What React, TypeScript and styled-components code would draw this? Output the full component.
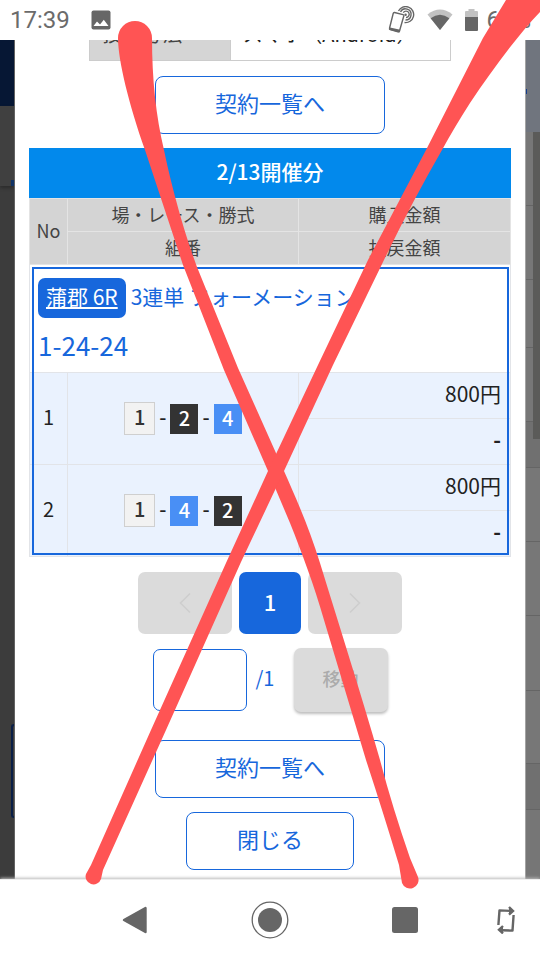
import React from "react";
import styled, { createGlobalStyle, css } from "styled-components";

const blue = "#1767dc";
const red = "#ff5454";
const iconGray = "#666666";

const GlobalStyle = createGlobalStyle`
  *, *::before, *::after { box-sizing: border-box; }
  body {
    margin: 0;
    background: #ffffff;
    color: #222222;
    font-family: "Noto Sans CJK JP", "Noto Sans", sans-serif;
    font-size: 22px;
  }
  button, input { font: inherit; }
`;

const Screen = styled.div`
  position: relative;
  display: flex;
  flex-direction: column;
  min-height: 100vh;
  overflow: hidden;
`;

const StatusBar = styled.header`
  display: flex;
  align-items: center;
  height: 40px;
  padding: 0 9px 0 10px;
  color: #6b6b6b;
  font-family: Roboto, sans-serif;
  font-size: 24px;
  line-height: 42px;
`;

const Clock = styled.time`
  margin-right: 21px;
`;

const StatusIcons = styled.div`
  display: flex;
  align-items: center;
  gap: 12px;
  margin-left: auto;
  svg { display: block; }
`;

const BatteryStatus = styled.div`
  display: flex;
  align-items: center;
  gap: 8px;
`;

const Stage = styled.main`
  flex: 1;
  display: grid;
  grid-template-columns: 15px minmax(0, 1fr) 15px;
  background: #3c3c3c;
`;

const Strip = styled.div`
  display: flex;
  flex-direction: column;
  overflow: hidden;
`;

const LeftStrip = styled(Strip)`
  border-right: 1px solid #626262;
`;

const NavyBand = styled.div`
  height: 66px;
  background: #061734;
`;

const TabBand = styled.div`
  display: flex;
  align-items: flex-end;
  justify-content: flex-end;
  height: 80px;
  background: #404040;
  box-shadow: 0 2px 3px #2c2c2c;
`;

const TabMark = styled.span`
  width: 3px;
  height: 6px;
  background: #103366;
`;

const FieldEdge = styled.div`
  align-self: flex-end;
  width: 3px;
  height: 94px;
  margin-top: 538px;
  border: 2px solid #0a1f47;
  border-right: 0;
  border-radius: 4px 0 0 4px;
`;

const RightStrip = styled(Strip)`
  position: relative;
  background: #767676;
  border-left: 1px solid #a3a3a3;
`;

const HeadBand = styled.div`
  display: flex;
  align-items: center;
  height: 92px;
  padding-top: 10px;
  background: #70757e;
`;

const HeadMark = styled.span`
  width: 1px;
  height: 5px;
  background: #123c8c;
`;

const ListLine = styled.div<{ $height: number; $dim?: boolean }>`
  height: ${(p) => p.$height}px;
  border-bottom: 1px solid #656565;
  background: ${(p) => (p.$dim ? "#707070" : "#777777")};
`;

const ScrollThumb = styled.div`
  position: absolute;
  top: 92px;
  right: 0;
  width: 7px;
  height: 307px;
  background: #5b5b59;
`;

const Dialog = styled.section`
  display: flex;
  flex-direction: column;
  align-items: center;
  padding: 0 14px 9px;
  background: #ffffff;
`;

const MethodWindow = styled.div`
  display: flex;
  align-items: flex-end;
  width: 75%;
  height: 21px;
  margin-bottom: 15px;
  overflow: hidden;
`;

const MethodTable = styled.table`
  width: 100%;
  border-collapse: collapse;
  table-layout: fixed;
  font-size: 20px;
  line-height: 24px;
  text-align: left;
  th, td {
    height: 46px;
    padding: 0 12px 8px;
    border: 1px solid #cccccc;
    font-weight: 400;
  }
  th {
    width: 39%;
    background: #d5d5d5;
    color: #444444;
  }
`;

const OutlineButton = styled.button<{ $width: number }>`
  width: ${(p) => p.$width}px;
  height: 58px;
  padding: 0 0 6px;
  border: 1px solid ${blue};
  border-radius: 8px;
  background: #ffffff;
  color: ${blue};
  line-height: 28px;
`;

const DayTitle = styled.h2`
  width: 100%;
  height: 50px;
  margin: 14px 0 0;
  background: #0289ec;
  color: #ffffff;
  font-size: 21px;
  font-weight: 500;
  line-height: 46px;
  text-align: center;
`;

const BetTable = styled.table`
  width: 100%;
  border-collapse: collapse;
  table-layout: fixed;
  line-height: 28px;
`;

const NoCol = styled.col`
  width: 38px;
`;
const BetCol = styled.col`
  width: 48%;
`;

const HeadCell = styled.th`
  height: 33px;
  padding: 0 0 3px;
  border: 1px solid #e4e4e4;
  background: #d4d4d4;
  color: #444444;
  font-size: 18px;
  font-weight: 400;
`;

const Ticket = styled.tbody`
  outline: 2px solid ${blue};
  outline-offset: -4px;
`;

const cellBorder = css`
  border: 1px solid #e2e4e8;
`;

const TicketTitle = styled.td`
  ${cellBorder}
  height: 108px;
  padding: 2px 8px 0;
  color: ${blue};
  font-size: 21px;
  vertical-align: top;
`;

const TitleLine = styled.div`
  display: flex;
  align-items: center;
  gap: 5px;
  margin-top: 11px;
`;

const RaceLink = styled.a`
  height: 40px;
  padding: 0 8px;
  border-radius: 7px;
  background: ${blue};
  color: #ffffff;
  line-height: 37px;
  text-decoration: underline;
  text-decoration-thickness: 2px;
  text-underline-offset: 2px;
  white-space: nowrap;
`;

const BetType = styled.span`
  height: 40px;
  line-height: 36px;
`;

const Numbers = styled.div`
  margin-top: 9px;
  font-size: 26px;
  line-height: 36px;
`;

const DataCell = styled.td`
  ${cellBorder}
  height: 46px;
  padding: 0;
  background: #eaf2fe;
  font-size: 20px;
  text-align: center;
`;

const NoCell = styled(DataCell)`
  padding-bottom: 3px;
`;

const MoneyCell = styled(DataCell)<{ $strong?: boolean }>`
  padding: 0 9px 6px 0;
  font-size: 21px;
  font-weight: ${(p) => (p.$strong ? 700 : 400)};
  text-align: right;
`;

const Combination = styled.div`
  display: flex;
  align-items: center;
  justify-content: center;
  gap: 4px;
  font-weight: 500;
`;

const Dash = styled.span`
  padding-bottom: 4px;
`;

const chipColors = {
  1: { background: "#f2f2f2", color: "#333333" },
  2: { background: "#333333", color: "#ffffff" },
  4: { background: "#498ff5", color: "#ffffff" },
};

type Boat = keyof typeof chipColors;

const Chip = styled.span<{ $boat: Boat }>`
  width: ${(p) => (p.$boat === 1 ? 31 : 28)}px;
  height: ${(p) => (p.$boat === 1 ? 33 : 30)}px;
  border: ${(p) => (p.$boat === 1 ? "1px solid #cfcfcf" : "0")};
  background: ${(p) => chipColors[p.$boat].background};
  color: ${(p) => chipColors[p.$boat].color};
  line-height: 28px;
`;

const Pager = styled.nav`
  display: flex;
  justify-content: center;
  gap: 7px;
  margin-top: 15px;
`;

const PageButton = styled.button<{ $current?: boolean }>`
  display: flex;
  align-items: center;
  justify-content: center;
  width: ${(p) => (p.$current ? 62 : 94)}px;
  height: 62px;
  padding: 0 0 ${(p) => (p.$current ? 4 : 0)}px;
  border: 0;
  border-radius: 7px;
  background: ${(p) => (p.$current ? blue : "#dbdbdb")};
  color: ${(p) => (p.$current ? "#ffffff" : "#cecece")};
  font-weight: 500;
`;

const JumpForm = styled.form`
  display: flex;
  align-items: center;
  margin: 14px 0 28px;
  color: ${blue};
  font-size: 20px;
`;

const PageInput = styled.input`
  width: 94px;
  height: 62px;
  margin-right: 9px;
  padding: 0 12px;
  border: 1px solid ${blue};
  border-radius: 7px;
  background: #ffffff;
  color: ${blue};
`;

const PageTotal = styled.label`
  width: 38px;
  line-height: 28px;
  padding-bottom: 4px;
`;

const MoveButton = styled.button`
  width: 94px;
  height: 64px;
  padding: 0 0 4px;
  border: 0;
  border-radius: 7px;
  background: #dbdbdb;
  box-shadow: 0 2px 3px #bdbdbd;
  color: #ababab;
  font-size: 18px;
  font-weight: 500;
`;

const ButtonStack = styled.div`
  display: flex;
  flex-direction: column;
  align-items: center;
  gap: 14px;
`;

const SystemNav = styled.nav`
  position: relative;
  display: grid;
  grid-template-columns: 1fr 2fr 2fr 2fr 1fr;
  align-items: center;
  justify-items: center;
  height: 81px;
  border-top: 1px solid #eeeeee;
  background: #ffffff;
  box-shadow: 0 -1px 3px #bbbbbb;
`;

const SystemButton = styled.button`
  display: flex;
  padding: 0;
  border: 0;
  background: transparent;
`;

const Scribble = styled.svg`
  position: absolute;
  inset: 0;
  width: 100%;
  height: 100%;
  pointer-events: none;
`;

const PictureIcon = () => (
  <svg width="20" height="20" viewBox="0 0 20 20" aria-hidden="true">
    <rect width="19" height="19" x="0.5" y="0.5" rx="2" fill={iconGray} />
    <path d="M2.5 16 L6 11.5 L9 14.5 L12.8 9.8 L17.5 16 Z" fill="#fff" />
  </svg>
);

const TouchPhoneIcon = () => (
  <svg width="27" height="28" viewBox="0 0 27 28" aria-hidden="true">
    <g fill="none" stroke={iconGray} strokeWidth="1.4">
      <path d="M6.5 6.5 L15 8.6 Q16 9 15.8 10 L11.5 25 Q11.2 26 10 25.7 L2.3 23.6 Q1.2 23.2 1.5 22.2 L5.2 7.5 Q5.5 6.3 6.5 6.5Z" />
      <path d="M12.5 5.8 A5.6 5.6 0 1 1 17.5 14" />
      <path d="M10.5 5 A8 8 0 1 1 16.5 16.5" />
      <path d="M15.3 6.6 A3.2 3.2 0 1 1 18 11.5" />
    </g>
    <path d="M2 21.5 L12.3 23.8 L11.4 26.4 L1.2 23.8Z" fill={iconGray} />
    <circle cx="17.6" cy="8.7" r="1.2" fill={iconGray} />
  </svg>
);

const WifiIcon = () => (
  <svg width="26" height="22" viewBox="0 0 26 22" aria-hidden="true">
    <path d="M0.5 5.5 Q13 -4.5 25.5 5.5 L13 21Z" fill="#c2c2c2" />
    <path d="M3.6 9.3 Q13 2.2 22.4 9.3 L13 21Z" fill={iconGray} />
  </svg>
);

const BatteryIcon = () => (
  <svg width="13" height="22" viewBox="0 0 13 22" aria-hidden="true">
    <path d="M3.5 0 H9.5 V2 H12 Q13 2 13 3 V9 H0 V3 Q0 2 1 2 H3.5Z" fill="#c2c2c2" />
    <path d="M0 8 H13 V21 Q13 22 12 22 H1 Q0 22 0 21Z" fill={iconGray} />
  </svg>
);

const Chevron = ({ direction }: { direction: "left" | "right" }) => (
  <svg width="12" height="22" viewBox="0 0 12 22" fill="none" aria-hidden="true">
    <path
      d={direction === "left" ? "M11 1.5 L1.5 11 L11 20.5" : "M1 1.5 L10.5 11 L1 20.5"}
      stroke="currentColor"
      strokeWidth="1.6"
    />
  </svg>
);

const BackIcon = () => (
  <svg width="26" height="28" viewBox="0 0 26 28" aria-hidden="true">
    <path d="M2 14 L23.5 2 V26Z" fill={iconGray} stroke={iconGray} strokeWidth="2.4" strokeLinejoin="round" />
  </svg>
);

const HomeIcon = () => (
  <svg width="38" height="38" viewBox="0 0 38 38" aria-hidden="true">
    <circle cx="19" cy="19" r="17.8" fill="none" stroke={iconGray} strokeWidth="1.3" />
    <circle cx="19" cy="19" r="12" fill={iconGray} />
  </svg>
);

const RecentIcon = () => (
  <svg width="26" height="26" viewBox="0 0 26 26" aria-hidden="true">
    <rect width="26" height="26" rx="2.5" fill={iconGray} />
  </svg>
);

const RotateIcon = () => (
  <svg width="18" height="28" viewBox="0 0 18 28" aria-hidden="true">
    <g fill="none" stroke={iconGray} strokeWidth="2.4">
      <path d="M1.4 19 L2.5 4.4 L13 4.9" strokeLinejoin="round" />
      <path d="M16.6 9 L15.5 24.6 L5 24.2" strokeLinejoin="round" />
      <path d="M12 1 L16 5 L12 8.6" />
      <path d="M6 20 L2 23.8 L6 27.4" />
    </g>
    <path d="M12 1.5 L16.8 5 L12 8Z" fill={iconGray} />
    <path d="M6 20.5 L1.2 23.8 L6 27Z" fill={iconGray} />
  </svg>
);

const bets: { no: number; boats: Boat[]; amount: string; payout: string }[] = [
  { no: 1, boats: [1, 2, 4], amount: "800円", payout: "-" },
  { no: 2, boats: [1, 4, 2], amount: "800円", payout: "-" },
];

const listRows = [74, 74, 68, 74, 46, 74, 74, 75, 73, 46];

export default function App() {
  return (
    <Screen>
      <GlobalStyle />
      <StatusBar>
        <Clock>17:39</Clock>
        <PictureIcon />
        <StatusIcons>
          <TouchPhoneIcon />
          <WifiIcon />
          <BatteryStatus>
            <BatteryIcon />
            <span>65%</span>
          </BatteryStatus>
        </StatusIcons>
      </StatusBar>

      <Stage>
        <LeftStrip aria-hidden="true">
          <NavyBand />
          <TabBand>
            <TabMark />
          </TabBand>
          <FieldEdge />
        </LeftStrip>

        <Dialog>
          <MethodWindow>
            <MethodTable>
              <tbody>
                <tr>
                  <th scope="row">投票方法</th>
                  <td>スマホ（Android）</td>
                </tr>
              </tbody>
            </MethodTable>
          </MethodWindow>
          <OutlineButton type="button" $width={230}>契約一覧へ</OutlineButton>

          <DayTitle>2/13開催分</DayTitle>
          <BetTable>
            <colgroup>
              <NoCol />
              <BetCol />
              <col />
            </colgroup>
            <thead>
              <tr>
                <HeadCell rowSpan={2}>No</HeadCell>
                <HeadCell>場・レース・勝式</HeadCell>
                <HeadCell>購入金額</HeadCell>
              </tr>
              <tr>
                <HeadCell>組番</HeadCell>
                <HeadCell>払戻金額</HeadCell>
              </tr>
            </thead>
            <Ticket>
              <tr>
                <TicketTitle colSpan={3}>
                  <TitleLine>
                    <RaceLink href="#race">蒲郡 6R</RaceLink>
                    <BetType>3連単 フォーメーション</BetType>
                  </TitleLine>
                  <Numbers>1-24-24</Numbers>
                </TicketTitle>
              </tr>
              {bets.map((bet) => (
                <React.Fragment key={bet.no}>
                  <tr>
                    <NoCell rowSpan={2}>{bet.no}</NoCell>
                    <DataCell rowSpan={2}>
                      <Combination>
                        {bet.boats.map((boat, i) => (
                          <React.Fragment key={boat}>
                            {i > 0 && <Dash>-</Dash>}
                            <Chip $boat={boat}>{boat}</Chip>
                          </React.Fragment>
                        ))}
                      </Combination>
                    </DataCell>
                    <MoneyCell>{bet.amount}</MoneyCell>
                  </tr>
                  <tr>
                    <MoneyCell $strong>{bet.payout}</MoneyCell>
                  </tr>
                </React.Fragment>
              ))}
            </Ticket>
          </BetTable>

          <Pager aria-label="ページ">
            <PageButton type="button" disabled aria-label="前へ">
              <Chevron direction="left" />
            </PageButton>
            <PageButton type="button" $current aria-current="page">1</PageButton>
            <PageButton type="button" disabled aria-label="次へ">
              <Chevron direction="right" />
            </PageButton>
          </Pager>
          <JumpForm onSubmit={(e) => e.preventDefault()}>
            <PageInput id="page" type="text" inputMode="numeric" />
            <PageTotal htmlFor="page">/1</PageTotal>
            <MoveButton type="submit" disabled>移動</MoveButton>
          </JumpForm>

          <ButtonStack>
            <OutlineButton type="button" $width={230}>契約一覧へ</OutlineButton>
            <OutlineButton type="button" $width={168}>閉じる</OutlineButton>
          </ButtonStack>
        </Dialog>

        <RightStrip aria-hidden="true">
          <HeadBand>
            <HeadMark />
          </HeadBand>
          {listRows.map((height, i) => (
            <ListLine key={i} $height={height} $dim={height === 46} />
          ))}
          <ScrollThumb />
        </RightStrip>
      </Stage>

      <SystemNav aria-label="システム">
        <span />
        <SystemButton type="button" aria-label="戻る"><BackIcon /></SystemButton>
        <SystemButton type="button" aria-label="ホーム"><HomeIcon /></SystemButton>
        <SystemButton type="button" aria-label="履歴"><RecentIcon /></SystemButton>
        <SystemButton type="button" aria-label="回転"><RotateIcon /></SystemButton>
      </SystemNav>

      <Scribble viewBox="0 0 540 960" preserveAspectRatio="none" aria-hidden="true">
        <path
          fill={red}
          d="M118 38 A17 17 0 0 1 152 38 Q152 100 164 150 C174 198 188 243 197 267 L238 368 L284 471 C296 498 310 530 320 563 C338 622 360 690 380 760 Q392 806 410 858 L418 877 A8.5 8.5 0 0 1 402 883 L399 865 Q384 815 366 760 L324 620 C314 585 302 553 290 523 L268 471 L224 370 L183 265 L145 150 C129 105 118 60 118 38Z"
        />
        <path
          fill={red}
          d="M506 0 H540 V12 C518 35 492 70 470 103 Q454 128 442 150 Q412 202 383 262 L333 365 L284 471 L241 562 L166 730 L103 870 L101 879 A7.5 7.5 0 0 1 86 874 L91 865 L151 730 L226 563 L268 471 L318 365 L368 260 L426 150 L483 38Z"
        />
      </Scribble>
    </Screen>
  );
}
